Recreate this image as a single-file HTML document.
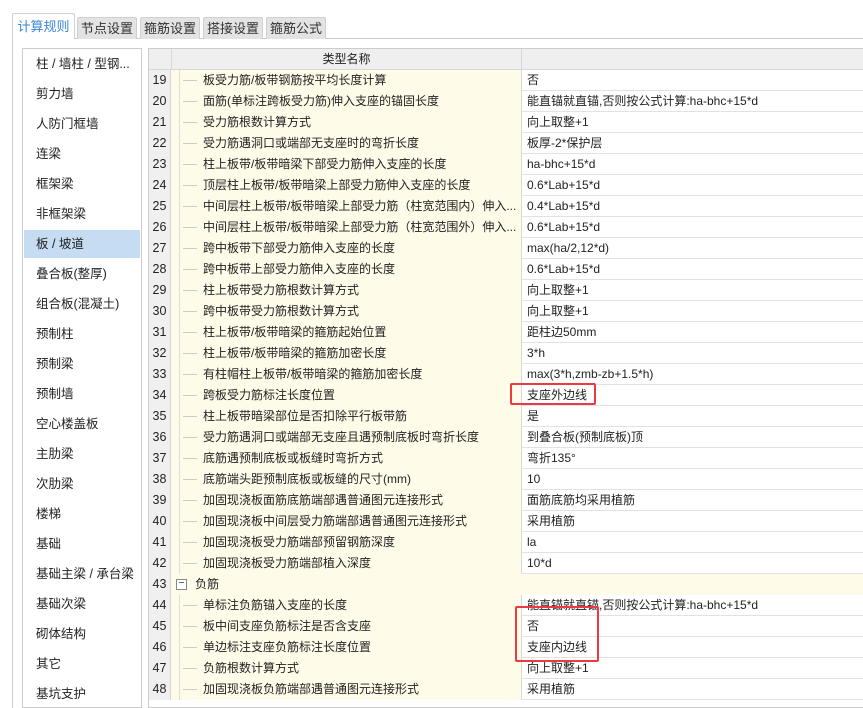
<!DOCTYPE html><html><head><meta charset="utf-8"><style>
*{margin:0;padding:0;box-sizing:border-box}
body{width:863px;height:701px;overflow:hidden;background:#fff;font-family:"Liberation Sans","Noto Sans CJK SC",sans-serif;font-size:12px;color:#222;position:relative}
.tab{position:absolute;top:17px;height:22px;background:#e3e3e3;border:1px solid #d0d0d0;border-bottom:none;font-size:13px;line-height:21px;text-align:center;color:#333;border-radius:2px 2px 0 0;white-space:nowrap;overflow:hidden}
.tab.on{top:13px;height:26px;background:#fff;color:#3a86d8;line-height:26px}
.panel{position:absolute;left:12px;top:38px;width:860px;height:670px;border:1px solid #ccc;border-right:none;border-bottom:none}
.list{position:absolute;left:22px;top:48px;width:120px;height:660px;border:1px solid #ccc;background:#fff}
.li{position:absolute;left:1px;width:116px;height:28px;line-height:28px;padding-left:12px;font-size:12.5px}
.li.sel{background:#c5dcf2}
.tbl{position:absolute;left:148px;top:48px;width:720px;height:660px;border:1px solid #ccc;border-right:none}
.hd{position:absolute;left:0;top:0;height:21px;width:720px;background:#efefef;border-bottom:1px solid #d8d8d8}
.row{position:absolute;left:0;height:21px;width:720px;border-bottom:1px solid #e2e2e2}
.n{position:absolute;left:0;top:0;width:22px;height:21px;background:#f0f0f0;border-right:1px solid #d8d8d8;text-align:center;line-height:20px;font-size:12.5px}
.nm{position:absolute;left:22px;top:0;width:351px;height:21px;background:#fffbe9;border-right:1px solid #d8d8d8;line-height:20px;padding-left:32px;white-space:nowrap;overflow:hidden}
.nm:before{content:"";position:absolute;left:8px;top:0;height:21px;border-left:1px solid #ddd}
.nm:after{content:"";position:absolute;left:12px;top:10px;width:14px;border-top:1px solid #ccc}
.nm.g{padding-left:24px}.nm.g:before,.nm.g:after{display:none}
.box{position:absolute;left:5px;top:5px;width:11px;height:11px;border:1px solid #888;font-size:10px;line-height:8px;text-align:center;background:#fff}
.v{position:absolute;left:374px;top:0;line-height:20px;padding-left:4px;white-space:nowrap}
.red{position:absolute;border:2px solid #ec3a45;border-radius:2px}
</style></head><body>
<div class="panel"></div>
<div class="tab on" style="left:12px;width:63px">计算规则</div>
<div class="tab" style="left:77px;width:60px">节点设置</div>
<div class="tab" style="left:140px;width:60px">箍筋设置</div>
<div class="tab" style="left:203px;width:60px">搭接设置</div>
<div class="tab" style="left:266px;width:60px">箍筋公式</div>
<div class="list">
<div class="li" style="top:1px">柱 / 墙柱 / 型钢...</div>
<div class="li" style="top:31px">剪力墙</div>
<div class="li" style="top:61px">人防门框墙</div>
<div class="li" style="top:91px">连梁</div>
<div class="li" style="top:121px">框架梁</div>
<div class="li" style="top:151px">非框架梁</div>
<div class="li sel" style="top:181px">板 / 坡道</div>
<div class="li" style="top:211px">叠合板(整厚)</div>
<div class="li" style="top:241px">组合板(混凝土)</div>
<div class="li" style="top:271px">预制柱</div>
<div class="li" style="top:301px">预制梁</div>
<div class="li" style="top:331px">预制墙</div>
<div class="li" style="top:361px">空心楼盖板</div>
<div class="li" style="top:391px">主肋梁</div>
<div class="li" style="top:421px">次肋梁</div>
<div class="li" style="top:451px">楼梯</div>
<div class="li" style="top:481px">基础</div>
<div class="li" style="top:511px">基础主梁 / 承台梁</div>
<div class="li" style="top:541px">基础次梁</div>
<div class="li" style="top:571px">砌体结构</div>
<div class="li" style="top:601px">其它</div>
<div class="li" style="top:631px">基坑支护</div>
</div>
<div class="tbl">
<div class="hd"><div style="position:absolute;left:22px;width:351px;height:21px;border-left:1px solid #d8d8d8;border-right:1px solid #d8d8d8;text-align:center;line-height:20px">类型名称</div></div>
<div class="row" style="top:21px"><div class="n">19</div><div class="nm">板受力筋/板带钢筋按平均长度计算</div><div class="v">否</div></div>
<div class="row" style="top:42px"><div class="n">20</div><div class="nm">面筋(单标注跨板受力筋)伸入支座的锚固长度</div><div class="v">能直锚就直锚,否则按公式计算:ha-bhc+15*d</div></div>
<div class="row" style="top:63px"><div class="n">21</div><div class="nm">受力筋根数计算方式</div><div class="v">向上取整+1</div></div>
<div class="row" style="top:84px"><div class="n">22</div><div class="nm">受力筋遇洞口或端部无支座时的弯折长度</div><div class="v">板厚-2*保护层</div></div>
<div class="row" style="top:105px"><div class="n">23</div><div class="nm">柱上板带/板带暗梁下部受力筋伸入支座的长度</div><div class="v">ha-bhc+15*d</div></div>
<div class="row" style="top:126px"><div class="n">24</div><div class="nm">顶层柱上板带/板带暗梁上部受力筋伸入支座的长度</div><div class="v">0.6*Lab+15*d</div></div>
<div class="row" style="top:147px"><div class="n">25</div><div class="nm">中间层柱上板带/板带暗梁上部受力筋（柱宽范围内）伸入...</div><div class="v">0.4*Lab+15*d</div></div>
<div class="row" style="top:168px"><div class="n">26</div><div class="nm">中间层柱上板带/板带暗梁上部受力筋（柱宽范围外）伸入...</div><div class="v">0.6*Lab+15*d</div></div>
<div class="row" style="top:189px"><div class="n">27</div><div class="nm">跨中板带下部受力筋伸入支座的长度</div><div class="v">max(ha/2,12*d)</div></div>
<div class="row" style="top:210px"><div class="n">28</div><div class="nm">跨中板带上部受力筋伸入支座的长度</div><div class="v">0.6*Lab+15*d</div></div>
<div class="row" style="top:231px"><div class="n">29</div><div class="nm">柱上板带受力筋根数计算方式</div><div class="v">向上取整+1</div></div>
<div class="row" style="top:252px"><div class="n">30</div><div class="nm">跨中板带受力筋根数计算方式</div><div class="v">向上取整+1</div></div>
<div class="row" style="top:273px"><div class="n">31</div><div class="nm">柱上板带/板带暗梁的箍筋起始位置</div><div class="v">距柱边50mm</div></div>
<div class="row" style="top:294px"><div class="n">32</div><div class="nm">柱上板带/板带暗梁的箍筋加密长度</div><div class="v">3*h</div></div>
<div class="row" style="top:315px"><div class="n">33</div><div class="nm">有柱帽柱上板带/板带暗梁的箍筋加密长度</div><div class="v">max(3*h,zmb-zb+1.5*h)</div></div>
<div class="row" style="top:336px"><div class="n">34</div><div class="nm">跨板受力筋标注长度位置</div><div class="v">支座外边线</div></div>
<div class="row" style="top:357px"><div class="n">35</div><div class="nm">柱上板带暗梁部位是否扣除平行板带筋</div><div class="v">是</div></div>
<div class="row" style="top:378px"><div class="n">36</div><div class="nm">受力筋遇洞口或端部无支座且遇预制底板时弯折长度</div><div class="v">到叠合板(预制底板)顶</div></div>
<div class="row" style="top:399px"><div class="n">37</div><div class="nm">底筋遇预制底板或板缝时弯折方式</div><div class="v">弯折135°</div></div>
<div class="row" style="top:420px"><div class="n">38</div><div class="nm">底筋端头距预制底板或板缝的尺寸(mm)</div><div class="v">10</div></div>
<div class="row" style="top:441px"><div class="n">39</div><div class="nm">加固现浇板面筋底筋端部遇普通图元连接形式</div><div class="v">面筋底筋均采用植筋</div></div>
<div class="row" style="top:462px"><div class="n">40</div><div class="nm">加固现浇板中间层受力筋端部遇普通图元连接形式</div><div class="v">采用植筋</div></div>
<div class="row" style="top:483px"><div class="n">41</div><div class="nm">加固现浇板受力筋端部预留钢筋深度</div><div class="v">la</div></div>
<div class="row" style="top:504px"><div class="n">42</div><div class="nm">加固现浇板受力筋端部植入深度</div><div class="v">10*d</div></div>
<div class="row" style="top:525px"><div class="n">43</div><div class="nm g" style="width:698px;border-right:none"><span class="box">−</span>负筋</div></div>
<div class="row" style="top:546px"><div class="n">44</div><div class="nm">单标注负筋锚入支座的长度</div><div class="v">能直锚就直锚,否则按公式计算:ha-bhc+15*d</div></div>
<div class="row" style="top:567px"><div class="n">45</div><div class="nm">板中间支座负筋标注是否含支座</div><div class="v">否</div></div>
<div class="row" style="top:588px"><div class="n">46</div><div class="nm">单边标注支座负筋标注长度位置</div><div class="v">支座内边线</div></div>
<div class="row" style="top:609px"><div class="n">47</div><div class="nm">负筋根数计算方式</div><div class="v">向上取整+1</div></div>
<div class="row" style="top:630px"><div class="n">48</div><div class="nm">加固现浇板负筋端部遇普通图元连接形式</div><div class="v">采用植筋</div></div>
</div>
<div class="red" style="left:510px;top:383px;width:86px;height:22px"></div>
<div class="red" style="left:515px;top:606px;width:84px;height:56px"></div>
</body></html>
